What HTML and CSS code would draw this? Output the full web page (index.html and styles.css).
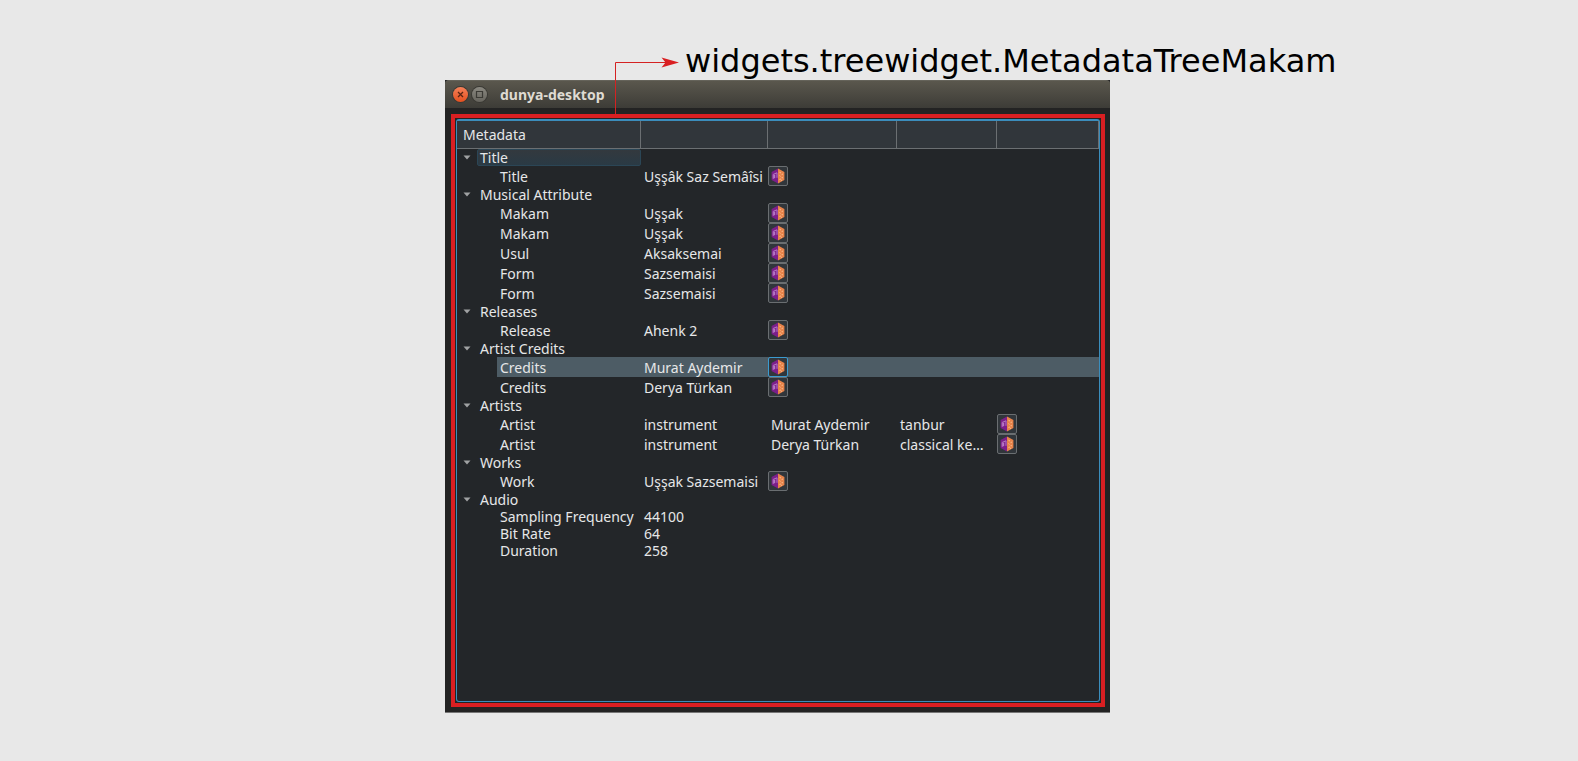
FILE: index.html
```html
<!DOCTYPE html>
<html lang="en">
<head>
<meta charset="utf-8">
<title>dunya-desktop</title>
<link rel="stylesheet" href="styles.css">
</head>
<body>
<svg class="defs" aria-hidden="true">
  <symbol id="brainz" viewBox="0 0 14 16">
    <path d="M7 0.5 L0.6 4 V12 L7 15.5Z" fill="#7b1f8a"/>
    <path d="M7 0.5 L13.4 4 V12 L7 15.5Z" fill="#e8834a"/>
    <path d="M2.2 10.8 V6.4 L6 4.8 V9.8" fill="none" stroke="#b678c4" stroke-width="1"/>
    <path d="M2.4 10.4 V7 L4.2 6.4 V10Z" fill="#b678c4"/>
    <path d="M8.4 4.2 L10 5 M10.6 6.6 L12 6 M8.4 7.6 L9.6 8.4 M10.6 9.6 L12 9.8 M8.4 11.4 L10 11 M10 12.6 L11 12" stroke="#f8bd8c" stroke-width="1"/>
  </symbol>
  <symbol id="arrow" viewBox="0 0 8 5"><path d="M0.5 0.5 H7.5 L4 4.5Z" fill="#a0a2a3"/></symbol>
</svg>
<div class="page">
  <header class="callout">
    <h1 class="callout-name">widgets.treewidget.MetadataTreeMakam</h1>
    <svg class="callout-line" viewBox="0 0 66 58" aria-hidden="true">
      <path d="M1.5 58 V6.5 H54" fill="none" stroke="#d42222" stroke-width="1"/>
      <path d="M65 6.5 L47.5 1.5 L51.5 6.5 L47.5 11.5Z" fill="#d91f22"/>
    </svg>
  </header>
  <main class="window">
    <div class="titlebar">
      <button class="wm close" aria-label="Close"><svg viewBox="0 0 15 15"><path d="M5 5 L10 10 M10 5 L5 10" stroke="#5a2413" stroke-width="1.3"/></svg></button>
      <button class="wm" aria-label="Maximize"><svg viewBox="0 0 15 15"><path d="M4.5 4.5 H10.5 V10.5 H4.5Z" fill="none" stroke="#3b3a35" stroke-width="1.2"/></svg></button>
      <span class="window-title">dunya-desktop</span>
    </div>
    <div class="frame">
      <div class="tree">
        <table>
          <colgroup><col class="c-name"><col class="c-value"><col class="c-extra"><col class="c-role"><col></colgroup>
          <thead><tr><th>Metadata</th><th></th><th></th><th></th><th></th></tr></thead>
          <tbody>
            <tr class="group current"><td><div class="branch"><button class="toggle" aria-label="Collapse Title"><svg><use href="#arrow"/></svg></button><span class="label">Title</span></div></td><td></td><td></td><td></td><td></td></tr>
            <tr class="item"><td><span class="label">Title</span></td><td>Uşşâk Saz Semâîsi</td><td class="act"><button class="open" aria-label="Open"><svg><use href="#brainz"/></svg></button></td><td></td><td></td></tr>
            <tr class="group"><td colspan="5"><div class="branch"><button class="toggle" aria-label="Collapse Musical Attribute"><svg><use href="#arrow"/></svg></button><span class="label">Musical Attribute</span></div></td></tr>
            <tr class="item"><td><span class="label">Makam</span></td><td>Uşşak</td><td class="act"><button class="open" aria-label="Open"><svg><use href="#brainz"/></svg></button></td><td></td><td></td></tr>
            <tr class="item"><td><span class="label">Makam</span></td><td>Uşşak</td><td class="act"><button class="open" aria-label="Open"><svg><use href="#brainz"/></svg></button></td><td></td><td></td></tr>
            <tr class="item"><td><span class="label">Usul</span></td><td>Aksaksemai</td><td class="act"><button class="open" aria-label="Open"><svg><use href="#brainz"/></svg></button></td><td></td><td></td></tr>
            <tr class="item"><td><span class="label">Form</span></td><td>Sazsemaisi</td><td class="act"><button class="open" aria-label="Open"><svg><use href="#brainz"/></svg></button></td><td></td><td></td></tr>
            <tr class="item"><td><span class="label">Form</span></td><td>Sazsemaisi</td><td class="act"><button class="open" aria-label="Open"><svg><use href="#brainz"/></svg></button></td><td></td><td></td></tr>
            <tr class="group"><td colspan="5"><div class="branch"><button class="toggle" aria-label="Collapse Releases"><svg><use href="#arrow"/></svg></button><span class="label">Releases</span></div></td></tr>
            <tr class="item"><td><span class="label">Release</span></td><td>Ahenk 2</td><td class="act"><button class="open" aria-label="Open"><svg><use href="#brainz"/></svg></button></td><td></td><td></td></tr>
            <tr class="group"><td colspan="5"><div class="branch"><button class="toggle" aria-label="Collapse Artist Credits"><svg><use href="#arrow"/></svg></button><span class="label">Artist Credits</span></div></td></tr>
            <tr class="item selected"><td><span class="label">Credits</span></td><td>Murat Aydemir</td><td class="act"><button class="open" aria-label="Open"><svg><use href="#brainz"/></svg></button></td><td></td><td></td></tr>
            <tr class="item"><td><span class="label">Credits</span></td><td>Derya Türkan</td><td class="act"><button class="open" aria-label="Open"><svg><use href="#brainz"/></svg></button></td><td></td><td></td></tr>
            <tr class="group"><td colspan="5"><div class="branch"><button class="toggle" aria-label="Collapse Artists"><svg><use href="#arrow"/></svg></button><span class="label">Artists</span></div></td></tr>
            <tr class="item"><td><span class="label">Artist</span></td><td>instrument</td><td>Murat Aydemir</td><td>tanbur</td><td class="act"><button class="open" aria-label="Open"><svg><use href="#brainz"/></svg></button></td></tr>
            <tr class="item"><td><span class="label">Artist</span></td><td>instrument</td><td>Derya Türkan</td><td>classical ke…</td><td class="act"><button class="open" aria-label="Open"><svg><use href="#brainz"/></svg></button></td></tr>
            <tr class="group"><td colspan="5"><div class="branch"><button class="toggle" aria-label="Collapse Works"><svg><use href="#arrow"/></svg></button><span class="label">Works</span></div></td></tr>
            <tr class="item"><td><span class="label">Work</span></td><td>Uşşak Sazsemaisi</td><td class="act"><button class="open" aria-label="Open"><svg><use href="#brainz"/></svg></button></td><td></td><td></td></tr>
            <tr class="group"><td colspan="5"><div class="branch"><button class="toggle" aria-label="Collapse Audio"><svg><use href="#arrow"/></svg></button><span class="label">Audio</span></div></td></tr>
            <tr class="plain"><td><span class="label">Sampling Frequency</span></td><td>44100</td><td></td><td></td><td></td></tr>
            <tr class="plain"><td><span class="label">Bit Rate</span></td><td>64</td><td></td><td></td><td></td></tr>
            <tr class="plain"><td><span class="label">Duration</span></td><td>258</td><td></td><td></td><td></td></tr>
          </tbody>
        </table>
      </div>
    </div>
  </main>
</div>
</body>
</html>
```
FILE: styles.css
```css
* { box-sizing: border-box; }

body {
  margin: 0;
  background: #e8e8e8;
  font-family: "Noto Sans", sans-serif;
  font-size: 14px;
  color: #e6e7e8;
}

button {
  margin: 0;
  padding: 0;
  border: 0;
  background: none;
}

.defs {
  position: absolute;
  width: 0;
  height: 0;
}

.page {
  min-height: 100vh;
  padding-bottom: 48px;
  display: grid;
  grid-template-columns: minmax(0, 445fr) minmax(0, 665fr) minmax(0, 468fr);
  grid-template-rows: 80px 1fr;
}

.callout {
  grid-column: 2;
  position: relative;
  padding: 42px 0 0 240px;
}

.callout-name {
  margin: 0;
  font: 32px/38px "DejaVu Sans", sans-serif;
  color: #000;
  white-space: nowrap;
}

.callout-line {
  position: absolute;
  left: 169px;
  top: 56px;
  width: 66px;
  height: 58px;
}

.window {
  grid-column: 2;
  display: flex;
  flex-direction: column;
  background: #232323;
  border-bottom: 1px solid #777;
}

.titlebar {
  height: 28px;
  display: flex;
  align-items: center;
  gap: 4px;
  padding-left: 8px;
  background: linear-gradient(#5a574d, #3d3c37);
  border-top: 1px solid #65635a;
  border-radius: 4px 4px 0 0;
}

.wm {
  width: 15px;
  height: 15px;
  border-radius: 50%;
  background: linear-gradient(#8a8880, #66645d);
  box-shadow: 0 0 0 1px #3a3934;
}

.wm svg {
  display: block;
  width: 15px;
  height: 15px;
}

.close {
  background: linear-gradient(#f58058, #e5501f);
}

.window-title {
  padding-left: 9px;
  font-weight: 700;
  color: #dfdbd2;
}

.frame {
  flex: 1;
  display: flex;
  margin: 6px 5px 5px 6px;
  padding: 1px;
  border: 4px solid #d91f22;
}

.tree {
  flex: 1;
  min-width: 0;
  background: #232629;
  border: 1px solid #3b8dbc;
  border-top-width: 2px;
  border-radius: 3px;
}

table {
  width: 100%;
  table-layout: fixed;
  border-collapse: separate;
  border-spacing: 0;
}

.c-name { width: 184px; }
.c-value { width: 127px; }
.c-extra { width: 129px; }
.c-role { width: 100px; }

th {
  height: 28px;
  padding: 0 6px;
  text-align: left;
  font-weight: 400;
  background: #31363b;
  border-right: 1px solid #6b6f72;
  border-bottom: 1px solid #6b6f72;
}

td {
  height: 17px;
  padding: 0 0 0 3px;
  line-height: 17px;
  white-space: nowrap;
}

.group td {
  padding: 0;
}

.item td {
  height: 20px;
  padding-top: 2px;
  line-height: 18px;
}

.branch {
  display: flex;
  height: 17px;
}

.toggle {
  width: 20px;
  padding-left: 6px;
  flex: none;
}

.toggle svg {
  display: block;
  width: 8px;
  height: 5px;
}

.branch .label {
  flex: 1;
  padding-left: 3px;
}

.current .label {
  line-height: 15px;
  background: linear-gradient(#33393e, #2a3a45);
  border: 1px solid #2b4656;
  border-radius: 2px;
  padding-left: 2px;
}

.item td:first-child,
.plain td:first-child {
  padding-top: 0;
  padding-left: 40px;
}

.item .label,
.plain .label {
  display: block;
  padding-left: 3px;
}

.item .label {
  padding-top: 2px;
}

.selected td:not(:first-child),
.selected .label {
  background: #4d5c65;
}

.item td.act {
  padding: 0;
}

.open {
  display: grid;
  place-items: center;
  width: 20px;
  height: 20px;
  background: #31363b;
  border: 1px solid #6a6e71;
  border-radius: 2px;
}

.open svg {
  width: 14px;
  height: 16px;
}

.selected .open {
  border-color: #3b9bd0;
}
```
